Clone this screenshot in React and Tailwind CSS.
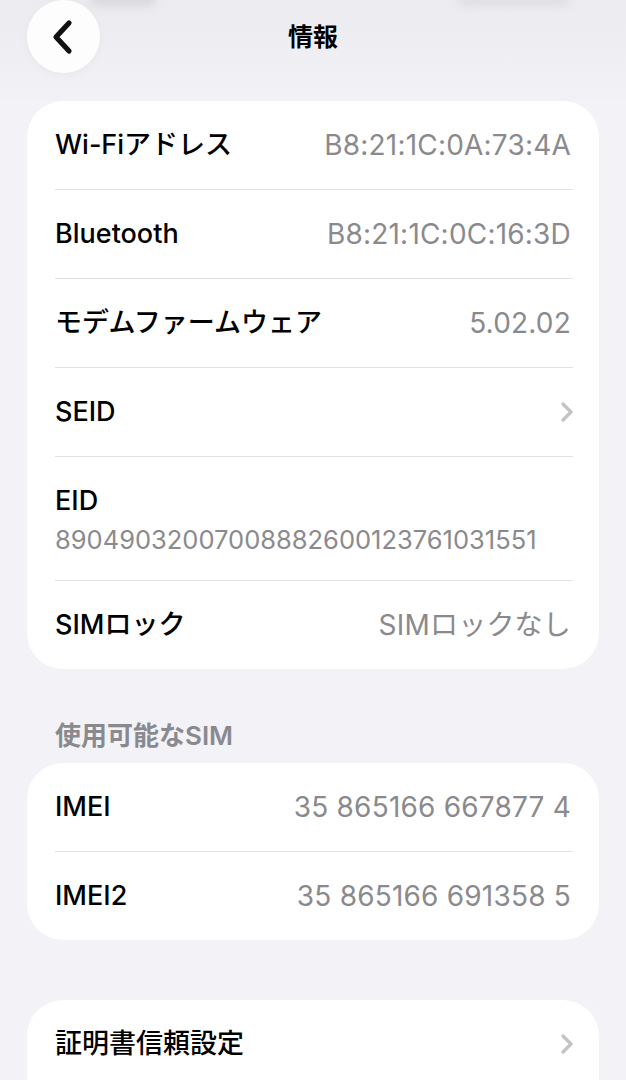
import { Fragment } from 'react'

const font = { fontFamily: 'Inter, "Noto Sans CJK JP", sans-serif' }

const mainRows = [
  { label: 'Wi-Fiアドレス', value: 'B8:21:1C:0A:73:4A' },
  { label: 'Bluetooth', value: 'B8:21:1C:0C:16:3D' },
  { label: 'モデムファームウェア', value: '5.02.02' },
  { label: 'SEID', chevron: true },
  { label: 'EID', sub: '89049032007008882600123761031551' },
  { label: 'SIMロック', value: 'SIMロックなし' },
]

const simRows = [
  { label: 'IMEI', value: '35 865166 667877 4' },
  { label: 'IMEI2', value: '35 865166 691358 5' },
]

function Chevron() {
  return (
    <svg width="14" height="22" viewBox="0 0 14 22" fill="none">
      <path d="M3 3 L11 11 L3 19" stroke="#c4c4c8" strokeWidth="3.4" strokeLinecap="round" strokeLinejoin="round" />
    </svg>
  )
}

function Row({ row }) {
  if (row.sub) {
    return (
      <div className="px-[28px] pt-[27px] pb-[24px]">
        <div className="text-[27px] leading-[34px] font-medium text-black">{row.label}</div>
        <div className="mt-[6px] text-[25.5px] leading-[32px] text-[#8a8a8e]">{row.sub}</div>
      </div>
    )
  }
  return (
    <div className="h-[88px] px-[28px] flex items-center justify-between">
      <span className="text-[27px] font-medium text-black">{row.label}</span>
      {row.chevron ? (
        <span className="-mr-[3px]"><Chevron /></span>
      ) : (
        <span className="text-[28px] text-[#8a8a8e] tracking-[0.2px]">{row.value}</span>
      )}
    </div>
  )
}

function Card({ rows, className = '' }) {
  return (
    <div className={`mx-[27px] bg-white rounded-[36px] overflow-hidden ${className}`}>
      {rows.map((row, i) => (
        <Fragment key={row.label}>
          {i > 0 && <div className="ml-[28px] mr-[26px] h-px bg-[#e2e2e6]" />}
          <Row row={row} />
        </Fragment>
      ))}
    </div>
  )
}

export default function App() {
  return (
    <div className="min-h-screen bg-[#f2f2f7] overflow-hidden" style={font}>
      <div className="relative h-[101px] bg-gradient-to-b from-[#ececf0] to-[#f1f1f6]">
        {/* blurred content scrolled under the bar */}
        <div className="absolute -top-[6px] left-[90px] w-[66px] h-[12px] rounded-full bg-[#c4c4c8] blur-[5px] opacity-50" />
        <div className="absolute -top-[6px] left-[458px] w-[112px] h-[12px] rounded-full bg-[#cacace] blur-[5px] opacity-40" />
        <div className="grid grid-cols-[100px_1fr_100px] items-start">
          <div className="pl-[27px]">
            <button className="w-[73px] h-[73px] rounded-full bg-white/90 shadow-[0_2px_10px_rgba(0,0,0,0.04)] flex items-center justify-center">
              <svg width="24" height="36" viewBox="0 0 24 36" fill="none" className="-ml-[2px]">
                <path d="M18 4 L5 18 L18 32" stroke="#111" strokeWidth="5.2" strokeLinecap="round" strokeLinejoin="round" />
              </svg>
            </button>
          </div>
          <div className="h-[75px] flex items-center justify-center text-[25px] font-bold text-black">
            情報
          </div>
          <div />
        </div>
      </div>

      <Card rows={mainRows} />

      <div className="pl-[55px] pt-[51px] pb-[11px] text-[26px] leading-[32px] font-semibold text-[#8a8a8e]">
        使用可能なSIM
      </div>

      <Card rows={simRows} />

      <div className="mx-[27px] mt-[60px] bg-white rounded-[36px] h-[120px]">
        <div className="h-[88px] px-[28px] flex items-center justify-between">
          <span className="text-[27px] font-medium text-black">証明書信頼設定</span>
          <span className="-mr-[3px]"><Chevron /></span>
        </div>
      </div>
    </div>
  )
}
